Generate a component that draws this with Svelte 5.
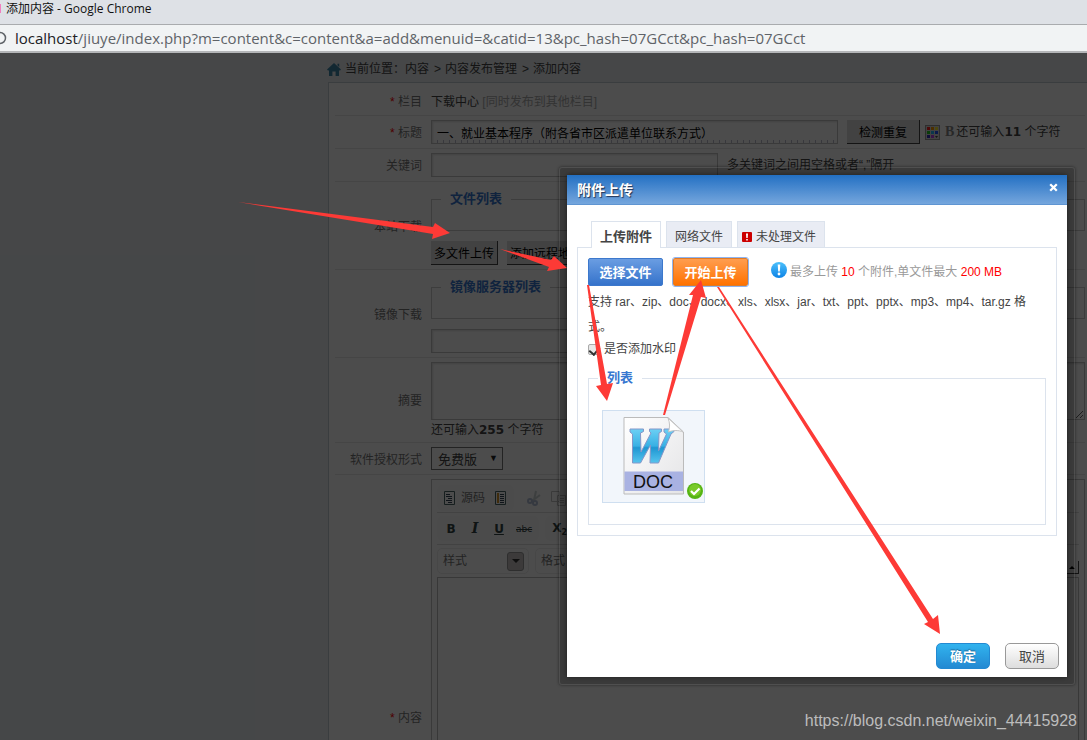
<script>
  let activeTab = $state("上传附件");
  let watermark = $state(true);
  let title = $state("一、就业基本程序（附各省市区派遣单位联系方式）");

  const crumbs = ["内容", "内容发布管理", "添加内容"];
  const tabs = [
    { name: "上传附件" },
    { name: "网络文件" },
    { name: "未处理文件", alert: true },
  ];

  // tail, near join, near barb, tip, far barb, far join
  const arrows = [
    "238,202 433,227 435,223 450,233 432,239 433,234",
    "500,249 551,260 554,256 567,268 547,271 549,267",
    "587,285 589,285 607,384 613,383 607,401 596,386 601,385",
    "663,415 693,295 689,295 701,280 706,298 701,297 665,415",
    "717,287 719,287 933,619 938,615 940,634 924,624 928,622",
  ];
</script>

<div class="window">
  <div class="title-bar"><span class="favicon"></span>添加内容 - Google Chrome</div>
  <div class="address-bar">
    <svg width="7" height="14" viewBox="0 0 7 14"><circle cx="0" cy="7" r="5.5" fill="none" stroke="#5f6368" stroke-width="1.5" /></svg>
    <span class="url"><b>localhost</b>/jiuye/index.php?m=content&c=content&a=add&menuid=&catid=13&pc_hash=07GCct&pc_hash=07GCct</span>
  </div>

  <div class="page">
    <nav class="crumbs">
      <svg width="14" height="13" viewBox="0 0 14 13"><path fill="#3d85a8" d="M7 0 14 6.5 12.8 7.8 12 7.1V13H8.6V8.5H5.4V13H2V7.1L1.2 7.8 0 6.5ZM10.5 0.8H12.2V4L10.5 2.6Z" /></svg>
      <span>当前位置：</span>
      {#each crumbs as crumb, i}
        {#if i > 0}<span class="sep">&gt;</span>{/if}
        <span>{crumb}</span>
      {/each}
    </nav>

    <form class="panel">
      <div class="row">
        <span class="name"><i>*</i> 栏目</span>
        <div class="line">下载中心 <a class="other" href="#other">[同时发布到其他栏目]</a></div>
      </div>
      <div class="row">
        <label class="name" for="title"><i>*</i> 标题</label>
        <div class="line">
          <input id="title" class="text title" bind:value={title} />
          <button type="button" class="check">检测重复</button>
          <svg class="palette" width="15" height="15" viewBox="0 0 15 15">
            <rect x=".5" y=".5" width="14" height="14" fill="#ddd" stroke="#999" />
            <path fill="#f22" d="M2 2h3v3H2z" /><path fill="#f90" d="M6 2h3v3H6z" /><path fill="#fe3" d="M10 2h3v3h-3z" />
            <path fill="#2c2" d="M2 6h3v3H2z" /><path fill="#2bf" d="M6 6h3v3H6z" /><path fill="#25f" d="M10 6h3v3h-3z" />
            <path fill="#33b" d="M2 10h3v3H2z" /><path fill="#b4e" d="M6 10h3v3H6z" /><path fill="#444" d="M10 11h3l-1.500 2z" />
          </svg>
          <span class="bold-mark">B</span>
          <span>还可输入<b>11</b> 个字符</span>
        </div>
      </div>
      <div class="row">
        <label class="name" for="keywords">关键词</label>
        <div class="line">
          <input id="keywords" class="text keywords" />
          <span>多关键词之间用空格或者“,”隔开</span>
        </div>
      </div>
      <div class="row">
        <span class="name">本站下载</span>
        <div>
          <fieldset class="files"><legend>文件列表</legend></fieldset>
          <div class="line">
            <button type="button" class="upload">多文件上传</button>
            <button type="button" class="upload">添加远程地址</button>
          </div>
        </div>
      </div>
      <div class="row">
        <label class="name" for="mirror">镜像下载</label>
        <div>
          <fieldset class="files"><legend>镜像服务器列表</legend></fieldset>
          <input id="mirror" class="text keywords" />
        </div>
      </div>
      <div class="row">
        <label class="name" for="summary">摘要</label>
        <div>
          <textarea id="summary"></textarea>
          <div class="left">还可输入<b>255</b> 个字符</div>
        </div>
      </div>
      <div class="row">
        <label class="name" for="license">软件授权形式</label>
        <div class="select">
          <select id="license"><option>免费版</option></select>
          <span>▼</span>
        </div>
      </div>
      <div class="row">
        <span class="name"><i>*</i> 内容</span>
        <div class="editor">
          <div class="tools">
            <div class="group">
              <button type="button" class="source">
                <svg width="12" height="14" viewBox="0 0 12 14"><path fill="#fff" stroke="#4a6666" d="M.5 .5h10v13H.5z" /><path stroke="#345" d="M2 3.500h4M2 5.500h6M4 7.500h4M2 9.500h6M4 11.500h4" /></svg>
                源码
              </button>
              <svg width="12" height="14" viewBox="0 0 12 14"><path fill="#fff" stroke="#4a6666" d="M.5 .5h10v13H.5z" /><path fill="#d8952a" d="M2 2h2v10H2z" /><path stroke="#345" d="M5 3.500h4M5 5.500h4M5 7.500h4M5 9.500h4M5 11.500h4" /></svg>
            </div>
            <div class="group faded">
              <svg width="14" height="16" viewBox="0 0 14 16" fill="none" stroke="#6a7fae" stroke-width="2"><path d="M9 1 7 10M13 5 5 11" stroke="#9aa" /><circle cx="3" cy="11" r="2" /><circle cx="8" cy="13" r="2" /></svg>
              <svg width="15" height="15" viewBox="0 0 15 15" fill="#fff" stroke="#888"><path d="M.5 .5h8v10h-8zM6.500 4.500h8v10h-8zM8 7.500h5M8 9.500h5M8 11.500h5" /></svg>
            </div>
          </div>
          <div class="tools">
            <div class="group marks">
              <button type="button"><b>B</b></button>
              <button type="button"><em>I</em></button>
              <button type="button"><u>U</u></button>
              <button type="button"><s>abc</s></button>
            </div>
            <div class="group marks"><button type="button"><b>X<sub>2</sub></b></button></div>
          </div>
          <div class="tools combos">
            <button type="button" class="combo">样式 <span class="drop"></span></button>
            <button type="button" class="combo">格式 <span class="drop"></span></button>
            <button type="button" class="collapse" aria-label="收起工具栏"></button>
          </div>
          <div class="canvas"></div>
        </div>
      </div>
    </form>
    <div class="mask"></div>
  </div>

  <div class="frame">
    <div class="dialog" role="dialog" aria-label="附件上传">
      <header>
        <span>附件上传</span>
        <button class="close" aria-label="关闭"><svg width="9" height="9" viewBox="0 0 9 9"><path d="M1.200 1.200l6.600 6.600M7.800 1.200l-6.600 6.600" stroke="#fff" stroke-width="2.300" /></svg></button>
      </header>
      <div class="body">
        <div class="tabs">
          {#each tabs as tab}
            <button class:active={activeTab === tab.name} onclick={() => (activeTab = tab.name)}>
              {#if tab.alert}
                <svg width="10" height="10" viewBox="0 0 10 10"><rect width="10" height="10" rx="1" fill="#c00" /><path fill="#fff" d="M4 1.500h2L5.700 6H4.300zM4.200 7h1.600v1.500H4.200z" /></svg>
              {/if}
              {tab.name}
            </button>
          {/each}
        </div>
        <div class="box">
          <div class="actions">
            <button class="choose">选择文件</button>
            <button class="start">开始上传</button>
            <svg class="info" width="16" height="16" viewBox="0 0 16 16">
              <defs><linearGradient id="info" x2="0" y2="1"><stop stop-color="#4cc0fb" /><stop offset="1" stop-color="#0d83e6" /></linearGradient></defs>
              <circle cx="8" cy="8" r="8" fill="url(#info)" />
              <path fill="#fff" d="M6.700 2.500h2.600L8.800 9.500H7.200z" /><circle cx="8" cy="12" r="1.400" fill="#fff" />
            </svg>
            <span class="limit">最多上传 <em>10</em> 个附件,单文件最大 <em>200 MB</em></span>
          </div>
          <p>支持 rar、zip、doc、docx、xls、xlsx、jar、txt、ppt、pptx、mp3、mp4、tar.gz 格式。</p>
          <label class="mark"><input type="checkbox" bind:checked={watermark} />是否添加水印</label>
          <fieldset class="queue">
            <legend>列表</legend>
            <div class="thumb">
              <svg width="62" height="78" viewBox="0 0 62 78">
                <defs>
                  <linearGradient id="paper" x2="1" y2="1"><stop stop-color="#fff" /><stop offset="1" stop-color="#e4e4e6" /></linearGradient>
                  <linearGradient id="letter" x2="0" y2="1"><stop stop-color="#6cd0f4" /><stop offset=".5" stop-color="#38b0e4" /><stop offset=".55" stop-color="#1f96d2" /><stop offset="1" stop-color="#55c4ee" /></linearGradient>
                </defs>
                <path fill="url(#paper)" stroke="#bbb" d="M1 .5H45L60.500 15V77H1Z" />
                <path fill="#a9b2e2" d="M1.500 54.500H60V74H1.500Z" />
                <path fill="url(#letter)" stroke="#8496c8" d="M7 12H20.500V14.500L17.500 16 18 35 28 16 26.500 14.500V12H38.500V14.500L36 16 35.500 34 43.500 17 41 15V12H51V14.500L48 17 35.500 46H27L27.500 28 17.500 46H9.500L9.500 17 7 15Z" />
                <path fill="#fff" stroke="#c4c4c4" d="M45 1C47 6 47 10 45.500 15 50 13 56 13 60 15Z" />
                <text x="30" y="71" text-anchor="middle" font-size="18" font-family="Liberation Sans, sans-serif" fill="#111">DOC</text>
              </svg>
              <svg class="done" width="16" height="16" viewBox="0 0 16 16"><circle cx="8" cy="8" r="8" fill="#55b413" /><circle cx="8" cy="7" r="6" fill="#79ca29" /><path d="M4 8l3 3 5.500-5.500" fill="none" stroke="#fff" stroke-width="2.200" /></svg>
            </div>
          </fieldset>
        </div>
        <footer>
          <button class="ok">确定</button>
          <button>取消</button>
        </footer>
      </div>
    </div>
  </div>

  <svg class="arrows" width="1087" height="740" viewBox="0 0 1087 740">
    {#each arrows as points}
      <polygon {points} />
    {/each}
  </svg>
  <div class="credit">https://blog.csdn.net/weixin_44415928</div>
</div>

<style>
  :global(body) {
    margin: 0;
  }

  .window {
    position: relative;
    display: flex;
    flex-direction: column;
    height: 100vh;
    overflow: hidden;
    font: 12px/18px "Liberation Sans", "Noto Sans CJK SC", sans-serif;
    color: #444;
  }

  .window * {
    box-sizing: border-box;
  }

  button,
  input,
  select,
  textarea {
    margin: 0;
    padding: 0;
    font: inherit;
    color: inherit;
    border: 0;
    background: none;
  }

  svg {
    flex: none;
    display: block;
  }

  /* Browser chrome */
  .title-bar {
    display: flex;
    align-items: center;
    gap: 5px;
    height: 25px;
    padding-bottom: 7px;
    background: #dee1e6;
    border-bottom: 1px solid #a9abae;
    font-family: "Open Sans", "Noto Sans CJK SC", sans-serif;
    color: #111;
  }

  .favicon {
    width: 1px;
    height: 9px;
    background: #f27ec0;
  }

  .address-bar {
    display: flex;
    align-items: center;
    gap: 8px;
    height: 28px;
    padding-bottom: 1px;
    background: #f1f3f4;
    border-bottom: 2px solid #b4b6b8;
    font: 15px/20px "Open Sans", sans-serif;
    color: #5f6368;
    white-space: nowrap;
  }

  .url b {
    font-weight: 400;
    color: #202124;
  }

  /* Publishing form */
  .page {
    position: relative;
    flex: 1;
    overflow: hidden;
    background: #e9edf1;
  }

  .mask {
    position: absolute;
    inset: 0;
    background: rgba(0, 0, 0, 0.7);
  }

  .crumbs {
    display: flex;
    align-items: center;
    height: 29px;
    padding: 3px 0 0 327px;
  }

  .crumbs svg {
    margin-right: 4px;
  }

  .sep {
    margin: 0 4px 0 5px;
  }

  .panel {
    margin-left: 328px;
    padding: 0 2px 0 6px;
    border: 1px solid #c4cdd4;
    border-right: 0;
    background: #fff;
  }

  .row {
    display: grid;
    grid-template-columns: 96px 1fr;
    align-items: center;
    min-height: 33px;
    padding: 4px 0;
    border-bottom: 1px solid #e8e8e8;
  }

  .row:first-child {
    padding: 10px 0 4px;
  }

  .row:nth-child(7) {
    min-height: 32px;
  }

  .name {
    padding: 2px 9px 0 0;
    text-align: right;
    color: #777;
  }

  .row:first-child .name {
    padding-top: 0;
  }

  .name i {
    font-style: normal;
    color: #f00;
  }

  .line {
    display: flex;
    align-items: center;
    white-space: pre;
  }

  .row b {
    font-family: "DejaVu Sans", sans-serif;
  }

  .other {
    color: #aaa;
    text-decoration: none;
  }

  .text {
    display: block;
    height: 24px;
    padding: 0 5px;
    border: 1px solid #c4c4c4;
    box-shadow: inset 1px 1px 2px #ddd;
  }

  .title {
    width: 407px;
    margin-right: 9px;
    color: #000;
    background: repeating-linear-gradient(90deg, transparent 0 5px, #bbc 5px 6px) 0 100% / 100% 3px no-repeat;
  }

  .keywords {
    width: 287px;
    margin-right: 9px;
  }

  .check,
  .upload {
    height: 24px;
    padding: 2px 2px 0;
    color: #000;
    background: #dcdcdc;
    border-right: 1px solid #444;
    border-bottom: 1px solid #444;
  }

  .check {
    padding: 2px 12px 0;
  }

  .upload {
    padding: 2px 3px 0;
    margin-right: 9px;
  }

  .palette {
    margin: 0 5px;
  }

  .bold-mark {
    margin-right: 2px;
    font: bold 14px/18px "Liberation Serif", serif;
    color: #888;
  }

  .files {
    margin: 4px 0 10px;
    padding: 0 0 22px;
    border: 1px solid #ccc;
  }

  legend {
    height: 18px;
    margin-left: 9px;
    padding: 0 9px;
    font-size: 13px;
    font-weight: bold;
    color: #3777d0;
  }

  textarea {
    display: block;
    width: 100%;
    height: 58px;
    border: 1px solid #c4c4c4;
    box-shadow: inset 1px 1px 2px #ddd;
  }

  .left {
    padding-top: 2px;
    line-height: 16px;
  }

  .select {
    position: relative;
    width: 72px;
  }

  select {
    display: block;
    width: 100%;
    height: 23px;
    padding: 2px 0 0 6px;
    appearance: none;
    border: 1px solid #777;
    font-size: 13px;
  }

  .select span {
    position: absolute;
    top: 2px;
    right: 5px;
    font-size: 9px;
    color: #222;
    pointer-events: none;
  }

  .editor {
    height: 476px;
    padding: 5px;
    border: 1px solid #c4c4c4;
    color: #777;
  }

  .tools {
    display: flex;
    gap: 6px;
    height: 28px;
    padding-bottom: 1px;
    border-bottom: 1px solid #ddd;
  }

  .tools + .tools {
    height: 32px;
    padding: 3px 0;
  }

  .group {
    display: flex;
    align-items: center;
    gap: 10px;
    padding: 0 7px;
    border-radius: 5px;
    background: #fcfcfc;
  }

  .faded {
    opacity: 0.5;
  }

  .source {
    display: flex;
    align-items: center;
    gap: 5px;
  }

  .marks button {
    min-width: 14px;
    font: 12px/18px "DejaVu Sans", sans-serif;
    color: #344;
  }

  .marks em {
    font: italic bold 14px/18px "DejaVu Serif", serif;
  }

  .marks u {
    font-weight: bold;
  }

  .marks s {
    font-size: 9px;
  }

  .marks sub {
    font-size: 8px;
    line-height: 8px;
  }

  .tools.combos {
    border: 0;
  }

  .combo {
    display: flex;
    align-items: center;
    justify-content: space-between;
    width: 92px;
    padding: 0 4px 0 5px;
    border: 1px solid #eee;
    border-radius: 5px;
  }

  .drop {
    display: flex;
    align-items: center;
    justify-content: center;
    width: 17px;
    height: 19px;
    border: 1px solid #999;
    border-radius: 3px;
    background: #c8c4c4;
  }

  .drop::after,
  .collapse::after {
    content: "";
    border: 4px solid transparent;
    border-top-color: #333;
    border-bottom: 0;
  }

  .collapse {
    display: flex;
    align-items: center;
    justify-content: center;
    align-self: flex-end;
    width: 13px;
    height: 13px;
    margin-left: auto;
    border-right: 1px solid #444;
    border-bottom: 1px solid #444;
  }

  .collapse::after {
    border: 3px solid transparent;
    border-top: 0;
    border-bottom-color: #000;
  }

  .canvas {
    height: 360px;
    border: 1px solid #bbb;
  }

  /* Upload dialog */
  .frame {
    position: absolute;
    top: 167px;
    left: 559px;
    width: 516px;
    padding: 7px;
    border: 1px solid rgba(255, 255, 255, 0.1);
    border-radius: 3px;
    background: rgba(0, 0, 0, 0.22);
    box-shadow: 0 0 3px rgba(0, 0, 0, 0.5);
  }

  .dialog {
    background: #fff;
    box-shadow: 0 0 5px rgba(0, 0, 0, 0.5);
  }

  header {
    display: flex;
    align-items: center;
    justify-content: space-between;
    height: 30px;
    padding: 0 9px 0 10px;
    border-bottom: 1px solid #5f95d2;
    background: linear-gradient(#2370c3, #75a6dd);
    font-size: 14px;
    font-weight: bold;
    color: #fff;
    text-shadow: 1px 1px 1px #235;
  }

  .close {
    padding: 0 0 4px;
  }

  .body {
    padding: 16px 10px 8px;
  }

  .tabs {
    display: flex;
    gap: 5px;
    padding-left: 14px;
  }

  .tabs button {
    display: flex;
    align-items: center;
    gap: 4px;
    height: 26px;
    padding: 4px 8px 0;
    border: 1px solid #dce3ed;
    border-bottom: 0;
    background: #e9ecf4;
  }

  .tabs button:last-child {
    padding-left: 4px;
  }

  .tabs .active {
    position: relative;
    height: 27px;
    margin-bottom: -1px;
    background: #fff;
    font-size: 13px;
    font-weight: bold;
  }

  .box {
    padding: 9px 10px 10px;
    border: 1px solid #dce3ed;
  }

  .actions {
    display: flex;
    align-items: center;
    height: 30px;
  }

  .actions button {
    height: 28px;
    padding-top: 2px;
    border-radius: 2px;
    font-size: 13px;
    font-weight: bold;
    color: #fff;
  }

  .choose {
    width: 75px;
    margin-right: 10px;
    border: 1px solid #3c78cc;
    background: linear-gradient(#6a9de2, #3573cb);
  }

  .start {
    width: 75px;
    margin-right: 23px;
    border: 1px solid #e07b26;
    outline: 1px solid #8fb4f0;
    background: linear-gradient(#ff9d4f, #ff7200);
  }

  .info {
    margin-bottom: 4px;
  }

  .limit {
    margin-left: 3px;
    color: #999;
  }

  .limit em {
    font-style: normal;
    color: #f00;
  }

  p {
    margin: 3px 0 0;
    line-height: 25px;
  }

  .mark {
    display: flex;
    align-items: center;
    gap: 5px;
  }

  .mark input {
    appearance: none;
    width: 11px;
    height: 11px;
    border: 1px solid #aaa;
    border-radius: 2px;
    background: #e8e8e8;
  }

  .mark input:checked::before {
    content: "";
    display: block;
    width: 5px;
    height: 8px;
    margin-left: 2px;
    border: solid #333;
    border-width: 0 2px 2px 0;
    transform: rotate(40deg);
  }

  .queue {
    margin: 11px 0 0;
    padding: 23px 13px 21px;
    border: 1px solid #dce3ed;
  }

  .queue legend {
    margin-left: -4px;
  }

  .thumb {
    position: relative;
    display: flex;
    justify-content: center;
    width: 103px;
    padding: 6px 0 7px;
    border: 1px solid #cfdff0;
    background: #f2f6fb;
  }

  .done {
    position: absolute;
    right: 1px;
    bottom: 3px;
  }

  footer {
    display: flex;
    justify-content: flex-end;
    gap: 15px;
    margin: 107px -2px 0 0;
  }

  footer button {
    width: 54px;
    height: 26px;
    padding-top: 1px;
    border: 1px solid #999;
    border-radius: 5px;
    background: linear-gradient(#fff, #ddd);
    font-size: 13px;
  }

  footer .ok {
    border-color: #2389d2;
    background: linear-gradient(#31b3ee, #2389d2);
    color: #fff;
    text-shadow: 0 -1px 1px #1c6a9c;
    font-weight: bold;
  }

  .arrows {
    position: absolute;
    top: 0;
    left: 0;
    fill: #fd3a36;
    pointer-events: none;
  }

  .credit {
    position: absolute;
    right: 10px;
    bottom: 10px;
    font-size: 16px;
    color: #bcbcbc;
  }
</style>
